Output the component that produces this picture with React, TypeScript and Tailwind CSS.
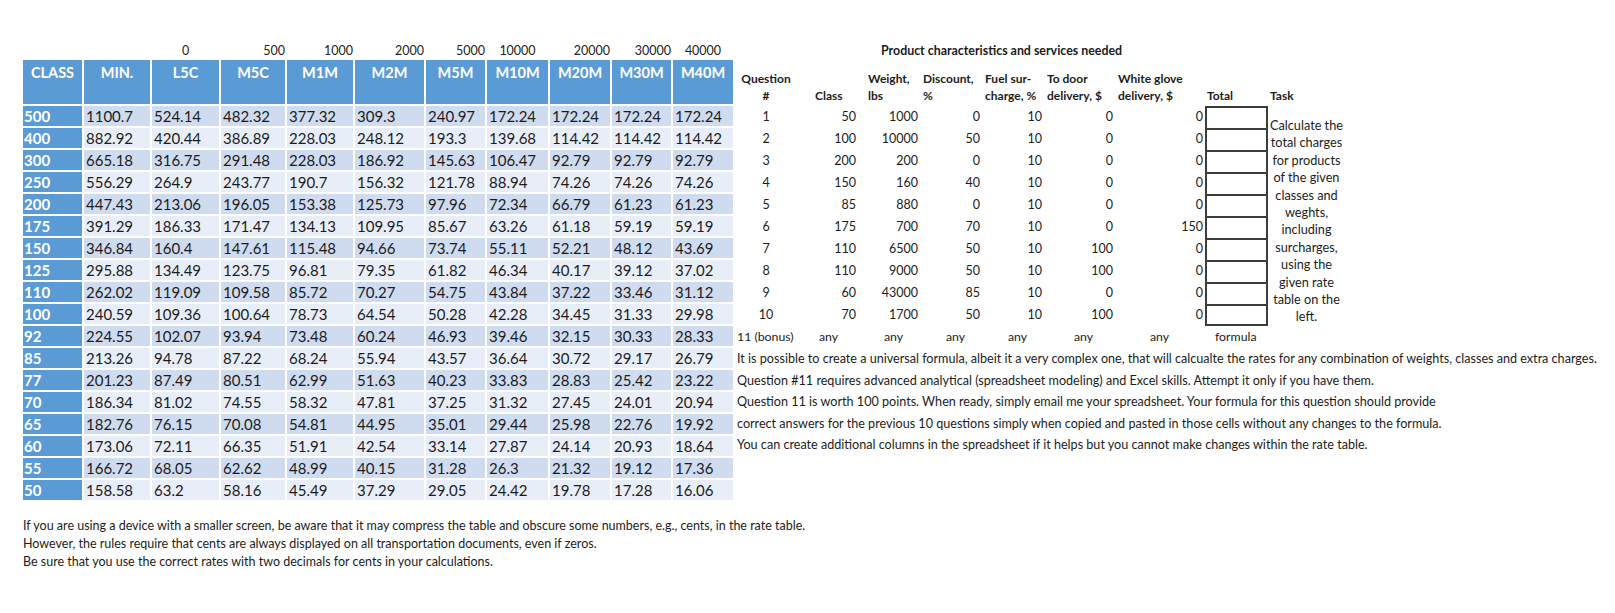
import React from 'react';

const rateRows: string[][] = [
  ['500', '1100.7', '524.14', '482.32', '377.32', '309.3', '240.97', '172.24', '172.24', '172.24', '172.24'],
  ['400', '882.92', '420.44', '386.89', '228.03', '248.12', '193.3', '139.68', '114.42', '114.42', '114.42'],
  ['300', '665.18', '316.75', '291.48', '228.03', '186.92', '145.63', '106.47', '92.79', '92.79', '92.79'],
  ['250', '556.29', '264.9', '243.77', '190.7', '156.32', '121.78', '88.94', '74.26', '74.26', '74.26'],
  ['200', '447.43', '213.06', '196.05', '153.38', '125.73', '97.96', '72.34', '66.79', '61.23', '61.23'],
  ['175', '391.29', '186.33', '171.47', '134.13', '109.95', '85.67', '63.26', '61.18', '59.19', '59.19'],
  ['150', '346.84', '160.4', '147.61', '115.48', '94.66', '73.74', '55.11', '52.21', '48.12', '43.69'],
  ['125', '295.88', '134.49', '123.75', '96.81', '79.35', '61.82', '46.34', '40.17', '39.12', '37.02'],
  ['110', '262.02', '119.09', '109.58', '85.72', '70.27', '54.75', '43.84', '37.22', '33.46', '31.12'],
  ['100', '240.59', '109.36', '100.64', '78.73', '64.54', '50.28', '42.28', '34.45', '31.33', '29.98'],
  ['92', '224.55', '102.07', '93.94', '73.48', '60.24', '46.93', '39.46', '32.15', '30.33', '28.33'],
  ['85', '213.26', '94.78', '87.22', '68.24', '55.94', '43.57', '36.64', '30.72', '29.17', '26.79'],
  ['77', '201.23', '87.49', '80.51', '62.99', '51.63', '40.23', '33.83', '28.83', '25.42', '23.22'],
  ['70', '186.34', '81.02', '74.55', '58.32', '47.81', '37.25', '31.32', '27.45', '24.01', '20.94'],
  ['65', '182.76', '76.15', '70.08', '54.81', '44.95', '35.01', '29.44', '25.98', '22.76', '19.92'],
  ['60', '173.06', '72.11', '66.35', '51.91', '42.54', '33.14', '27.87', '24.14', '20.93', '18.64'],
  ['55', '166.72', '68.05', '62.62', '48.99', '40.15', '31.28', '26.3', '21.32', '19.12', '17.36'],
  ['50', '158.58', '63.2', '58.16', '45.49', '37.29', '29.05', '24.42', '19.78', '17.28', '16.06'],
];

const headers = ['CLASS', 'MIN.', 'L5C', 'M5C', 'M1M', 'M2M', 'M5M', 'M10M', 'M20M', 'M30M', 'M40M'];

// weight break points above the header, with the alignment used in the sheet
const breaks: { text: string; align: string }[] = [
  { text: '', align: '' },
  { text: '', align: '' },
  { text: '0', align: 'text-center' },
  { text: '500', align: 'text-right' },
  { text: '1000', align: 'text-right' },
  { text: '2000', align: 'text-right' },
  { text: '5000', align: 'text-right' },
  { text: '10000', align: 'text-center' },
  { text: '20000', align: 'text-right' },
  { text: '30000', align: 'text-right' },
  { text: '40000', align: 'text-center' },
];

const questions: number[][] = [
  [1, 50, 1000, 0, 10, 0, 0],
  [2, 100, 10000, 50, 10, 0, 0],
  [3, 200, 200, 0, 10, 0, 0],
  [4, 150, 160, 40, 10, 0, 0],
  [5, 85, 880, 0, 10, 0, 0],
  [6, 175, 700, 70, 10, 0, 150],
  [7, 110, 6500, 50, 10, 100, 0],
  [8, 110, 9000, 50, 10, 100, 0],
  [9, 60, 43000, 85, 10, 0, 0],
  [10, 70, 1700, 50, 10, 100, 0],
];

const valuePad = ['pr-[10px]', 'pr-[3px]', 'pr-[3px]', 'pr-[3px]', 'pr-[3px]', 'pr-[2px]'];
const anyPad = ['pl-[6px]', 'pl-[18px]', 'pl-[25px]', 'pl-[25px]', 'pl-[29px]', 'pl-[34px]'];

const notes = [
  'It is possible to create a universal formula, albeit it a very complex one, that will calcualte the rates for any combination of weights, classes and extra charges.',
  'Question #11 requires advanced analytical (spreadsheet modeling) and Excel skills. Attempt it only if you have them.',
  'Question 11 is worth 100 points. When ready, simply email me your spreadsheet.  Your formula for this question should provide',
  'correct answers for the previous 10 questions simply when copied and pasted in those cells without any changes to the formula.',
  'You can create additional columns in the spreadsheet if it helps but you cannot make changes within the rate table.',
];

const taskLines = [
  'Calculate the',
  'total charges',
  'for products',
  'of the given',
  'classes and',
  'weghts,',
  'including',
  'surcharges,',
  'using the',
  'given rate',
  'table on the',
  'left.',
];

function RateTable() {
  const cols = 'grid grid-cols-[59px_66px_67px_64px_66px_69px_59px_61px_60px_59px_60px] gap-x-[2px]';
  return (
    <div className="pl-[23px]">
      <div className={`${cols} h-[18px] text-[12.5px] leading-[18px] text-[#222]`}>
        {breaks.map((b, i) => (
          <div key={i} className={b.align}>
            {b.text}
          </div>
        ))}
      </div>
      <div className={`${cols} gap-y-[2px]`}>
        {headers.map((h) => (
          <div
            key={h}
            className="h-[44px] bg-[#5b9bd5] pt-[4px] text-center text-[14.5px] font-bold leading-[18px] text-white"
          >
            {h}
          </div>
        ))}
        {rateRows.map((row, r) =>
          row.map((cell, c) =>
            c === 0 ? (
              <div
                key={`${r}-${c}`}
                className="h-[20px] bg-[#5b9bd5] pl-[1px] text-[15px] font-bold leading-[20px] text-white"
              >
                {cell}
              </div>
            ) : (
              <div
                key={`${r}-${c}`}
                className={`h-[20px] pl-[2px] text-[15px] leading-[20px] text-[#1c1c1c] ${
                  r % 2 === 0 ? 'bg-[#cfdbef]' : 'bg-[#e8eef8]'
                }`}
              >
                {cell}
              </div>
            ),
          ),
        )}
      </div>
    </div>
  );
}

function QuestionPanel() {
  return (
    <div className="ml-[4px] text-[#1c1c1c]">
      <div className="h-[18px] pl-[144px] text-[12.4px] font-bold leading-[18px]">
        Product characteristics and services needed
      </div>
      <div className="grid grid-cols-[76px_53px_55px_62px_62px_71px_89px_63px_77px] text-[12.5px]">
        {/* header */}
        <div className="flex h-[46px] items-end pb-[2px] text-[12px] font-bold leading-[17px]">
          <div className="w-[58px] text-center">
            Question
            <br />#
          </div>
        </div>
        <div className="flex h-[46px] items-end pb-[2px] pl-[2px] text-[12px] font-bold leading-[17px]">Class</div>
        <div className="flex h-[46px] items-end pb-[2px] pl-[2px] text-[12px] font-bold leading-[17px]">
          <div>
            Weight,
            <br />
            lbs
          </div>
        </div>
        <div className="flex h-[46px] items-end pb-[2px] pl-[2px] text-[12px] font-bold leading-[17px]">
          <div>
            Discount,
            <br />%
          </div>
        </div>
        <div className="flex h-[46px] items-end pb-[2px] pl-[2px] text-[12px] font-bold leading-[17px]">
          <div>
            Fuel sur-
            <br />
            charge, %
          </div>
        </div>
        <div className="flex h-[46px] items-end pb-[2px] pl-[2px] text-[12px] font-bold leading-[17px]">
          <div>
            To door
            <br />
            delivery, $
          </div>
        </div>
        <div className="flex h-[46px] items-end pb-[2px] pl-[2px] text-[12px] font-bold leading-[17px]">
          <div>
            White glove
            <br />
            delivery, $
          </div>
        </div>
        <div className="flex h-[46px] items-end pb-[2px] pl-[2px] text-[12px] font-bold leading-[17px]">Total</div>
        <div className="flex h-[46px] items-end pb-[2px] pl-[2px] text-[12px] font-bold leading-[17px]">Task</div>

        {/* task description, merged over the ten question rows */}
        <div className="col-start-9 row-span-10 row-start-2 pt-[11px] text-center text-[12.7px] leading-[17.4px]">
          {taskLines.map((line) => (
            <div key={line}>{line}</div>
          ))}
        </div>

        {questions.map((q, r) => (
          <React.Fragment key={q[0]}>
            <div className="h-[22px] leading-[22px]">
              <div className="w-[58px] text-center">{q[0]}</div>
            </div>
            {q.slice(1).map((v, i) => (
              <div key={i} className={`h-[22px] text-right leading-[22px] ${valuePad[i]}`}>
                {v}
              </div>
            ))}
            <div
              className={`h-[22px] border-x-2 border-t-2 border-[#3d3d3d] ${
                r === questions.length - 1 ? 'border-b-2' : ''
              }`}
            />
          </React.Fragment>
        ))}

        {/* bonus row */}
        <div className="h-[22px] text-[12.3px] leading-[22px]">11 (bonus)</div>
        {anyPad.map((p, i) => (
          <div key={i} className={`h-[22px] text-[12.3px] leading-[22px] ${p}`}>
            any
          </div>
        ))}
        <div className="h-[22px] pl-[10px] text-[12.3px] leading-[22px]">formula</div>
      </div>
      <div className="whitespace-nowrap text-[12.6px] leading-[21.6px]">
        {notes.map((n) => (
          <div key={n}>{n}</div>
        ))}
      </div>
    </div>
  );
}

export default function App() {
  return (
    <div className="min-h-screen w-full bg-white font-['Lato',sans-serif]">
      <div className="flex pt-[42px]">
        <RateTable />
        <QuestionPanel />
      </div>
      <div className="mt-[17px] pl-[23px] text-[12.5px] leading-[18px] text-[#1c1c1c]">
        <div>
          If you are using a device with a smaller screen, be aware that it may compress the table and obscure some
          numbers, e.g., cents, in the rate table.
        </div>
        <div>However, the rules require that cents are always displayed on all transportation documents, even if zeros.</div>
        <div>Be sure that you use the correct rates with two decimals for cents in your calculations.</div>
      </div>
    </div>
  );
}
